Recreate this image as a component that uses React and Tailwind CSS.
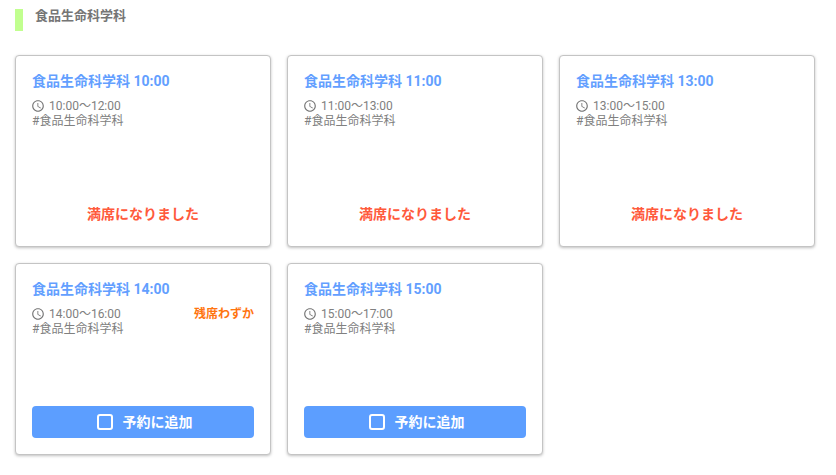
import React from 'react';

const slots = [
  { id: 1, title: '食品生命科学科 10:00', time: '10:00～12:00', full: true },
  { id: 2, title: '食品生命科学科 11:00', time: '11:00～13:00', full: true },
  { id: 3, title: '食品生命科学科 13:00', time: '13:00～15:00', full: true },
  { id: 4, title: '食品生命科学科 14:00', time: '14:00～16:00', few: true },
  { id: 5, title: '食品生命科学科 15:00', time: '15:00～17:00' },
];

function ClockIcon() {
  return (
    <svg viewBox="0 0 24 24" className="w-[14px] h-[14px] -ml-px shrink-0" fill="#757575">
      <path d="M11.99 2C6.47 2 2 6.48 2 12s4.47 10 9.99 10C17.52 22 22 17.52 22 12S17.52 2 11.99 2zM12 20c-4.42 0-8-3.58-8-8s3.58-8 8-8 8 3.58 8 8-3.58 8-8 8zm.5-13H11v6l5.25 3.15.75-1.23-4.5-2.67z" />
    </svg>
  );
}

function Card({ slot }) {
  return (
    <div className="w-[256px] h-[192px] bg-white border border-[#c4c4c4] rounded-[4px] shadow-[0_1px_3px_rgba(0,0,0,0.25)] px-4 pt-[15px] pb-4 flex flex-col">
      <h3 className="text-[14px] leading-[20px] font-bold text-[#639fff]">{slot.title}</h3>
      <div className="mt-[7px] flex items-center justify-between h-[16px]">
        <div className="flex items-center gap-[4px] text-[12px] leading-[16px] text-[#808080]">
          <ClockIcon />
          <span>{slot.time}</span>
        </div>
        {slot.few && <span className="text-[12px] leading-[16px] font-bold text-[#ff7410]">残席わずか</span>}
      </div>
      <p className="text-[12px] leading-[15px] text-[#808080]">#食品生命科学科</p>
      <div className="mt-auto">
        {slot.full ? (
          <p className="h-[32px] flex items-center justify-center text-[14px] font-bold text-[#ff5a3c]">満席になりました</p>
        ) : (
          <button className="w-full h-[32px] bg-[#5c9eff] rounded-[4px] pl-[3px] flex items-center justify-center gap-[10px] text-white text-[14px] font-bold">
            <span className="w-[16px] h-[16px] border-2 border-white rounded-[3px]" />
            予約に追加
          </button>
        )}
      </div>
    </div>
  );
}

export default function App() {
  return (
    <div className="w-[836px] h-[475px] bg-white overflow-hidden pl-[15px] pt-[9px] font-['Roboto','Noto_Sans_CJK_JP',sans-serif]">
      <div className="flex h-[22px] border-l-[8px] border-[#c1ff8f] pl-[12px]">
        <h2 className="text-[13px] leading-[14px] font-bold text-[#757575]">食品生命科学科</h2>
      </div>
      <div className="mt-[24px] flex flex-wrap gap-4 w-[816px]">
        {slots.map((slot) => (
          <Card key={slot.id} slot={slot} />
        ))}
      </div>
    </div>
  );
}
